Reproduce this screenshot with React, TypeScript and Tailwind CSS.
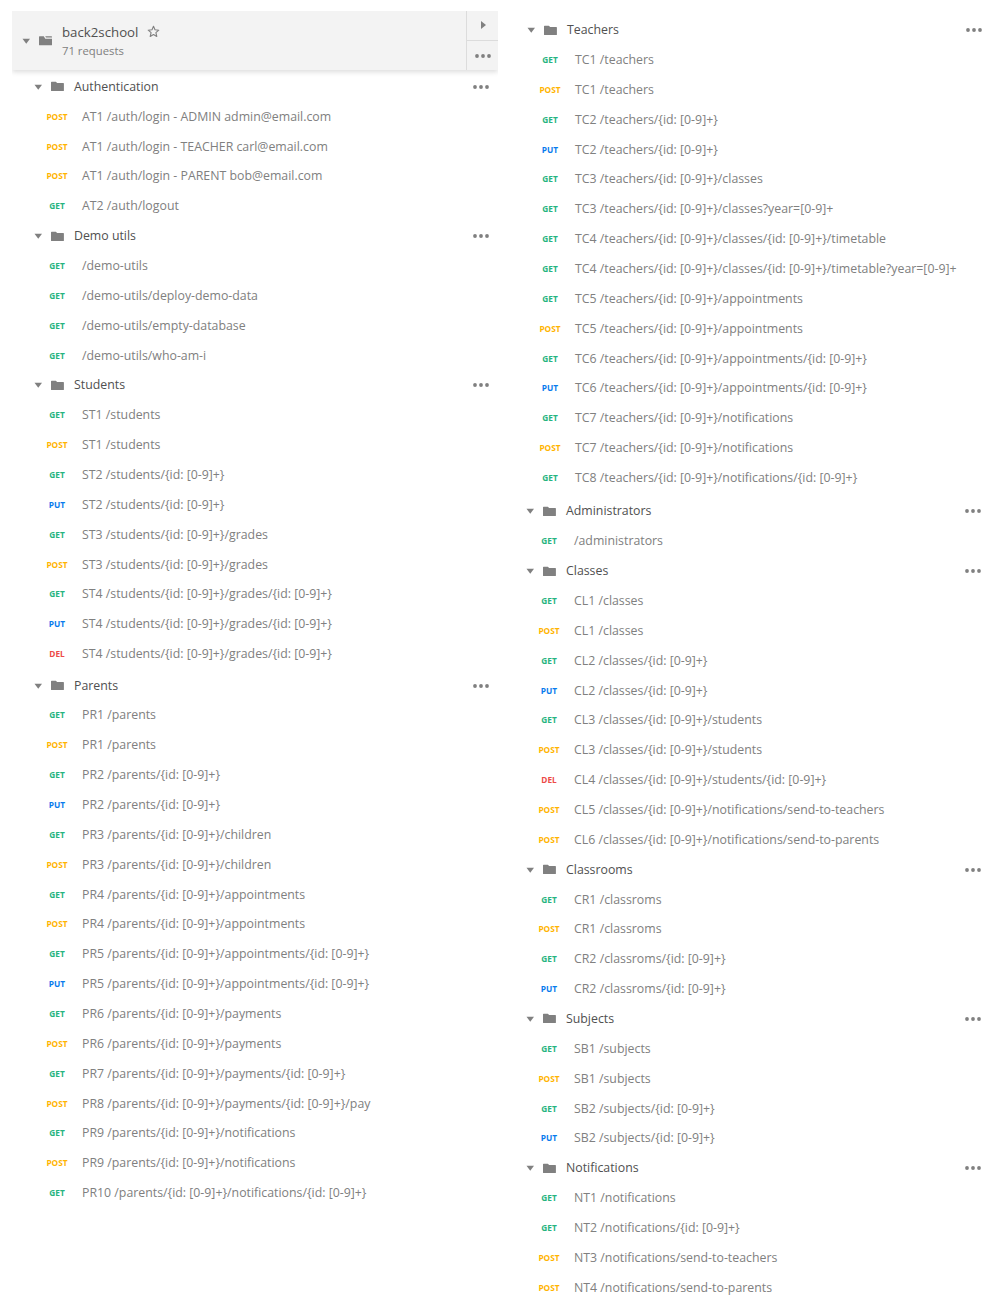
type Method = 'GET' | 'POST' | 'PUT' | 'DEL';
type Folder = { name: string; items: [Method, string][] };

const ID = '{id: [0-9]+}';

const main: Folder[] = [
  { name: 'Authentication', items: [
    ['POST', 'AT1 /auth/login - ADMIN admin@email.com'],
    ['POST', 'AT1 /auth/login - TEACHER carl@email.com'],
    ['POST', 'AT1 /auth/login - PARENT bob@email.com'],
    ['GET', 'AT2 /auth/logout'],
  ] },
  { name: 'Demo utils', items: [
    ['GET', '/demo-utils'],
    ['GET', '/demo-utils/deploy-demo-data'],
    ['GET', '/demo-utils/empty-database'],
    ['GET', '/demo-utils/who-am-i'],
  ] },
  { name: 'Students', items: [
    ['GET', 'ST1 /students'],
    ['POST', 'ST1 /students'],
    ['GET', `ST2 /students/${ID}`],
    ['PUT', `ST2 /students/${ID}`],
    ['GET', `ST3 /students/${ID}/grades`],
    ['POST', `ST3 /students/${ID}/grades`],
    ['GET', `ST4 /students/${ID}/grades/${ID}`],
    ['PUT', `ST4 /students/${ID}/grades/${ID}`],
    ['DEL', `ST4 /students/${ID}/grades/${ID}`],
  ] },
];

const parents: Folder[] = [
  { name: 'Parents', items: [
    ['GET', 'PR1 /parents'],
    ['POST', 'PR1 /parents'],
    ['GET', `PR2 /parents/${ID}`],
    ['PUT', `PR2 /parents/${ID}`],
    ['GET', `PR3 /parents/${ID}/children`],
    ['POST', `PR3 /parents/${ID}/children`],
    ['GET', `PR4 /parents/${ID}/appointments`],
    ['POST', `PR4 /parents/${ID}/appointments`],
    ['GET', `PR5 /parents/${ID}/appointments/${ID}`],
    ['PUT', `PR5 /parents/${ID}/appointments/${ID}`],
    ['GET', `PR6 /parents/${ID}/payments`],
    ['POST', `PR6 /parents/${ID}/payments`],
    ['GET', `PR7 /parents/${ID}/payments/${ID}`],
    ['POST', `PR8 /parents/${ID}/payments/${ID}/pay`],
    ['GET', `PR9 /parents/${ID}/notifications`],
    ['POST', `PR9 /parents/${ID}/notifications`],
    ['GET', `PR10 /parents/${ID}/notifications/${ID}`],
  ] },
];

const teachers: Folder[] = [
  { name: 'Teachers', items: [
    ['GET', 'TC1 /teachers'],
    ['POST', 'TC1 /teachers'],
    ['GET', `TC2 /teachers/${ID}`],
    ['PUT', `TC2 /teachers/${ID}`],
    ['GET', `TC3 /teachers/${ID}/classes`],
    ['GET', `TC3 /teachers/${ID}/classes?year=[0-9]+`],
    ['GET', `TC4 /teachers/${ID}/classes/${ID}/timetable`],
    ['GET', `TC4 /teachers/${ID}/classes/${ID}/timetable?year=[0-9]+`],
    ['GET', `TC5 /teachers/${ID}/appointments`],
    ['POST', `TC5 /teachers/${ID}/appointments`],
    ['GET', `TC6 /teachers/${ID}/appointments/${ID}`],
    ['PUT', `TC6 /teachers/${ID}/appointments/${ID}`],
    ['GET', `TC7 /teachers/${ID}/notifications`],
    ['POST', `TC7 /teachers/${ID}/notifications`],
    ['GET', `TC8 /teachers/${ID}/notifications/${ID}`],
  ] },
];

const school: Folder[] = [
  { name: 'Administrators', items: [['GET', '/administrators']] },
  { name: 'Classes', items: [
    ['GET', 'CL1 /classes'],
    ['POST', 'CL1 /classes'],
    ['GET', `CL2 /classes/${ID}`],
    ['PUT', `CL2 /classes/${ID}`],
    ['GET', `CL3 /classes/${ID}/students`],
    ['POST', `CL3 /classes/${ID}/students`],
    ['DEL', `CL4 /classes/${ID}/students/${ID}`],
    ['POST', `CL5 /classes/${ID}/notifications/send-to-teachers`],
    ['POST', `CL6 /classes/${ID}/notifications/send-to-parents`],
  ] },
  { name: 'Classrooms', items: [
    ['GET', 'CR1 /classroms'],
    ['POST', 'CR1 /classroms'],
    ['GET', `CR2 /classroms/${ID}`],
    ['PUT', `CR2 /classroms/${ID}`],
  ] },
  { name: 'Subjects', items: [
    ['GET', 'SB1 /subjects'],
    ['POST', 'SB1 /subjects'],
    ['GET', `SB2 /subjects/${ID}`],
    ['PUT', `SB2 /subjects/${ID}`],
  ] },
  { name: 'Notifications', items: [
    ['GET', 'NT1 /notifications'],
    ['GET', `NT2 /notifications/${ID}`],
    ['POST', 'NT3 /notifications/send-to-teachers'],
    ['POST', 'NT4 /notifications/send-to-parents'],
  ] },
];

const methodColor: Record<Method, string> = {
  GET: 'text-[#26b47f]',
  POST: 'text-[#ffb400]',
  PUT: 'text-[#097bed]',
  DEL: 'text-[#ed4b48]',
};

const Caret = () => (
  <svg className="h-[6px] w-2 shrink-0" viewBox="0 0 8 6" fill="#808080">
    <path d="M0.500 .7h7.500L4.250 5.700z" />
  </svg>
);

const FolderIcon = () => (
  <svg className="h-[11px] w-[13px] shrink-0" viewBox="0 0 13 11" fill="#808080">
    <path d="M0.600 .7h4.200l1.400 1.200h6.100q.6 0 .6.600v7q0 .6-.6.6H.6q-.6 0-.6-.6V1.300q0-.6.6-.6z" />
  </svg>
);

const CollectionIcon = () => (
  <svg className="h-[11px] w-[13px] shrink-0" viewBox="0 0 13 11" fill="#808080">
    <path d="M.6 1.200h4.200l1.500 2.500H13v6q0 .6-.6.6H.6q-.6 0-.6-.6v-7.900q0-.6.6-.6zM6.200 1.200h6.200q.6 0 .6.6v.8H7z" />
  </svg>
);

const Dots = () => (
  <svg className="h-1 w-4 shrink-0" viewBox="0 0 16 4" fill="#808080">
    <circle cx="2" cy="2" r="1.900" />
    <circle cx="8" cy="2" r="1.900" />
    <circle cx="14" cy="2" r="1.900" />
  </svg>
);

function Tree({ folders }: { folders: Folder[] }) {
  return (
    <>
      {folders.map((f) => (
        <section key={f.name}>
          <div className="flex h-[29.86px] items-center">
            <Caret />
            <span className="ml-[9px] flex"><FolderIcon /></span>
            <span className="ml-[10px] flex-1 text-[#505050]">{f.name}</span>
            <Dots />
          </div>
          {f.items.map(([method, label], i) => (
            <div key={i} className="flex h-[29.86px] items-center whitespace-nowrap pl-2">
              <span className={`w-[30px] text-center text-[8.300px] font-bold ${methodColor[method]}`}>{method}</span>
              <span className="ml-[10px] text-[#808080]">{label}</span>
            </div>
          ))}
        </section>
      ))}
    </>
  );
}

export default function App() {
  return (
    <div className="flex h-[1314px] w-[1000px] overflow-hidden bg-white font-['Open_Sans',sans-serif] text-[12.340px] leading-[18px]">
      <div className="ml-3 w-[486px] pt-[11px]">
        <header className="flex h-[59px] bg-[#f3f3f3] shadow-[0_2px_5px_rgba(0,0,0,0.14)] [clip-path:inset(0_0_-10px_0)]">
          <div className="flex flex-1 items-center pl-[10px]">
            <Caret />
            <span className="ml-[9px] flex"><CollectionIcon /></span>
            <div className="ml-[10px]">
              <div className="flex items-center text-[13.250px] leading-5 text-[#505050]">
                back2school
                <svg className="ml-[9px] size-[13px]" viewBox="0 0 13 13" fill="none" stroke="#808080" strokeWidth="1.1" strokeLinejoin="round">
                  <path d="M6.500 1.300l1.500 3.500 3.800.4-2.900 2.500.9 3.800-3.300-2-3.300 2 .9-3.800-2.900-2.500 3.800-.4z" />
                </svg>
              </div>
              <div className="text-[11.300px] leading-[18px] text-[#808080]">71 requests</div>
            </div>
          </div>
          <div className="flex w-8 flex-col border-l border-[#dcdcdc]">
            <div className="flex h-[30px] items-center justify-center border-b border-[#dcdcdc] pb-px pl-px">
              <svg className="h-2 w-[5px]" viewBox="0 0 5 8" fill="#808080"><path d="M0 0l5 4-5 4z" /></svg>
            </div>
            <div className="flex flex-1 items-center justify-center"><Dots /></div>
          </div>
        </header>
        <div className="pl-[22px] pr-[9px] pt-[1.900px]">
          <Tree folders={main} />
          <div className="pt-[1.500px]"><Tree folders={parents} /></div>
        </div>
      </div>
      <div className="w-[502px] pt-[15.200px]">
        <div className="pl-[29px] pr-[18px]"><Tree folders={teachers} /></div>
        <div className="pl-[28px] pr-[19px] pt-[3.500px]"><Tree folders={school} /></div>
      </div>
    </div>
  );
}
